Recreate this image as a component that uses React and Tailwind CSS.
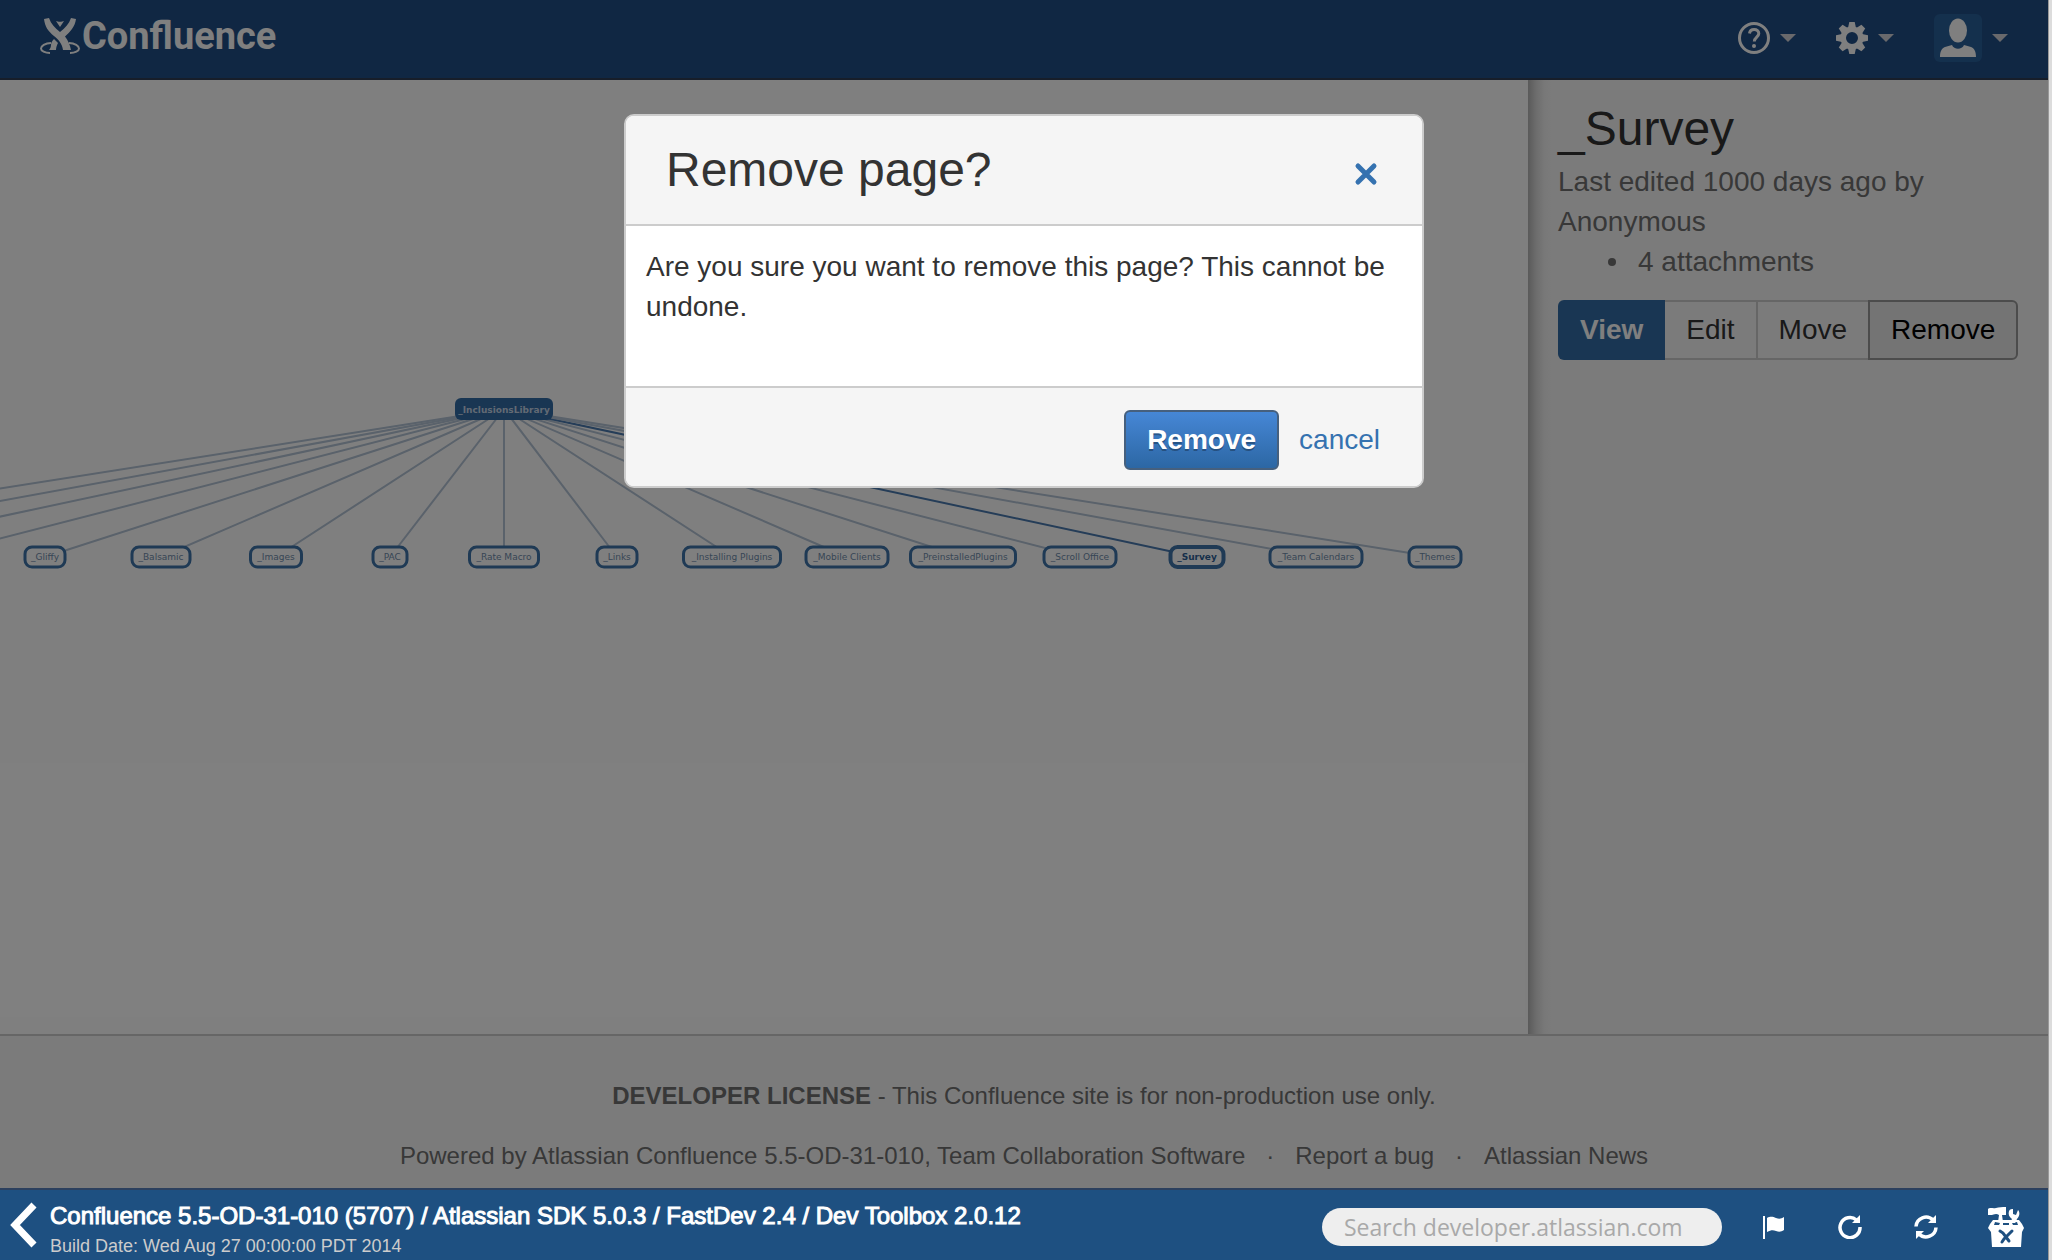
import React from "react";

const ROOT = { x: 504, y: 409, label: "_InclusionsLibrary" };

const NODES = [
  { x: -433 },
  { x: -307 },
  { x: -189 },
  { x: -72 },
  { x: 45, w: 40, label: "_Gliffy" },
  { x: 161, w: 58, label: "_Balsamic" },
  { x: 276, w: 51, label: "_Images" },
  { x: 390, w: 34, label: "_PAC" },
  { x: 504, w: 69, label: "_Rate Macro" },
  { x: 617, w: 40, label: "_Links" },
  { x: 732, w: 97, label: "_Installing Plugins" },
  { x: 847, w: 82, label: "_Mobile Clients" },
  { x: 963, w: 105, label: "_PreinstalledPlugins" },
  { x: 1080, w: 72, label: "_Scroll Office" },
  { x: 1197, w: 53, label: "_Survey", active: true },
  { x: 1316, w: 92, label: "_Team Calendars" },
  { x: 1435, w: 52, label: "_Themes" },
];
const CHILD_Y = 557;

function Graph() {
  return (
    <svg width="1528" height="954" viewBox="0 80 1528 954" className="block" role="img" aria-label="Page tree">
      {NODES.map((n) => (
        <line
          key={n.x}
          x1={ROOT.x}
          y1={ROOT.y}
          x2={n.x}
          y2={CHILD_Y}
          stroke={n.active ? "#4a7ab0" : "#b4c4d6"}
          strokeWidth="2"
        />
      ))}
      <rect x={ROOT.x - 49} y={398} width="98" height="22" rx="6" fill="#326ca6" />
      <text
        x={ROOT.x}
        y={413}
        textAnchor="middle"
        fontSize="9"
        fontWeight="bold"
        fill="#c4d4e6"
        fontFamily="'DejaVu Sans', sans-serif"
      >
        {ROOT.label}
      </text>
      {NODES.filter((n) => n.label).map((n) => (
        <g key={n.label}>
          <rect
            x={n.x - n.w / 2}
            y={CHILD_Y - 10}
            width={n.w}
            height="20"
            rx="7"
            fill="#ffffff"
            stroke="#3e74aa"
            strokeWidth={n.active ? 4 : 3}
          />
          <text
            x={n.x}
            y={CHILD_Y + 3}
            textAnchor="middle"
            fontSize="9"
            fontWeight={n.active ? "bold" : "normal"}
            fill={n.active ? "#2f5f96" : "#6f8cab"}
            fontFamily="'DejaVu Sans', sans-serif"
          >
            {n.label}
          </text>
        </g>
      ))}
    </svg>
  );
}

function Caret() {
  return (
    <svg width="16" height="8" viewBox="0 0 16 8" aria-hidden="true">
      <path d="M0 0h16L8 8z" fill="#d3d3d8" />
    </svg>
  );
}

function Header() {
  return (
    <header className="flex h-20 shrink-0 items-start justify-between border-b-2 border-[#2e3d54] bg-[#214e86] px-10">
      <a href="#home" className="mt-2.5 flex items-center gap-0.5 text-white">
        <svg width="40" height="36" viewBox="0 0 40 36" aria-hidden="true" fill="currentColor">
          <path d="M4 1L9 0C11 6 15 10 20 14C25 10 29 6 31 0L36 1C35 9 30 14 25 18.500C28 22 30 27 31 32L23 32C22 26 19 22 14 18C8 13 5 9 4 1Z" />
          <path d="M16 3c2 1 6 1 8 0l-4 6z" />
          <path d="M14 21l4 4c-1 2-2 4-2 7h-7c1-1 2-3 2-5 0-2 1-4 3-6z" />
          <path
            d="M11 25C5 25 1 28 1 30.500c0 2.500 4 4.500 9 4.500M29 25c6 0 10 3 10 5.500 0 2.500-4 4.500-9 4.500"
            fill="none"
            stroke="currentColor"
            strokeWidth="2"
          />
        </svg>
        <span className="font-[Roboto,sans-serif] text-[38px] leading-[52px] font-bold">Confluence</span>
      </a>
      <nav className="mt-3.5 flex h-12 items-center gap-10 text-white">
        <button type="button" aria-label="Help" className="flex items-center gap-2.5">
          <svg width="32" height="32" viewBox="0 0 32 32" aria-hidden="true" fill="none" stroke="currentColor">
            <circle cx="16" cy="16" r="14.5" strokeWidth="3" />
            <path d="M11.500 11.500c.3-2.600 2-4 4.600-4 2.800 0 4.700 1.600 4.700 4 0 3.500-4.500 3.700-4.500 8" strokeWidth="3" />
            <circle cx="16" cy="24" r="2" fill="currentColor" stroke="none" />
          </svg>
          <Caret />
        </button>
        <button type="button" aria-label="Settings" className="flex items-center gap-2.5">
          <svg width="32" height="32" viewBox="-16 -16 32 32" aria-hidden="true" fill="currentColor">
            <path
              fillRule="evenodd"
              d="M0-11.500A11.500 11.500 0 1 0 0 11.500A11.500 11.500 0 1 0 0-11.500ZM0-6A6 6 0 1 1 0 6A6 6 0 1 1 0-6Z"
            />
            {[0, 45, 90, 135, 180, 225, 270, 315].map((a) => (
              <path key={a} d="M-4-10L-2.700-16H2.700L4-10z" transform={`rotate(${a})`} />
            ))}
          </svg>
          <Caret />
        </button>
        <button type="button" aria-label="User menu" className="flex items-center gap-2.5">
          <span className="flex size-12 justify-center rounded-md bg-[#29609a]">
            <svg width="36" height="48" viewBox="0 0 36 48" aria-hidden="true" fill="currentColor">
              <ellipse cx="18" cy="16.500" rx="9" ry="12" />
              <path d="M0 43c0-6 2-9 5-10l7-2c2 5 10 5 12 0l7 2c3 1 5 4 5 10z" />
            </svg>
          </span>
          <Caret />
        </button>
      </nav>
    </header>
  );
}

function Sidebar() {
  return (
    <aside className="w-[520px] shrink-0 bg-[#f7f7f7] bg-[linear-gradient(to_right,#b4b4b4,#d9d9d9_8px,#f0f0f0_16px,#f7f7f7_24px)] px-[30px] pt-5">
      <h1 className="mb-1 text-[48px] leading-[58px] text-[#333]">_Survey</h1>
      <p className="text-[28px] leading-10 text-[#707070]">
        Last edited 1000 days ago by
        <br />
        Anonymous
      </p>
      <ul className="pl-[50px] text-[28px] leading-10 text-[#707070]">
        <li className="flex items-center gap-[22px] before:size-2 before:rounded-full before:bg-[#707070]">
          4 attachments
        </li>
      </ul>
      <div className="mt-[18px] flex h-[60px] text-[28px] text-[#333]">
        <button type="button" className="rounded-l-md bg-[#326ca6] px-[22px] font-bold text-white">
          View
        </button>
        <button type="button" className="border-y-2 border-r-2 border-[#ccc] px-[21px]">
          Edit
        </button>
        <button type="button" className="border-y-2 border-[#ccc] px-[21px]">
          Move
        </button>
        <button type="button" className="rounded-r-md border-2 border-[#999] bg-[#e9e9e9] px-[21px] text-black">
          Remove
        </button>
      </div>
    </aside>
  );
}

function Footer() {
  return (
    <footer className="flex h-[154px] shrink-0 flex-col items-center border-t-2 border-[#ccc] bg-[#f7f7f7] pt-10 text-2xl leading-10 text-[#707070]">
      <p>
        <strong>DEVELOPER LICENSE</strong> - This Confluence site is for non-production use only.
      </p>
      <ul className="mt-5 flex items-center">
        <li>Powered by Atlassian Confluence 5.5-OD-31-010, Team Collaboration Software</li>
        <li className="px-[21px]">·</li>
        <li>
          <a href="#bug">Report a bug</a>
        </li>
        <li className="px-[21px]">·</li>
        <li>
          <a href="#news">Atlassian News</a>
        </li>
      </ul>
    </footer>
  );
}

function Dialog() {
  return (
    <div
      role="dialog"
      aria-labelledby="dialog-title"
      className="w-[800px] overflow-hidden rounded-[10px] border-2 border-[#ccc] bg-white text-[28px] leading-10 text-[#333]"
    >
      <div className="flex h-[110px] items-center justify-between border-b-2 border-[#ccc] bg-[#f5f5f5] pr-11 pl-10">
        <h2 id="dialog-title" className="text-[48px] leading-[56px]">
          Remove page?
        </h2>
        <button type="button" aria-label="Close" className="mt-2 text-[#3572b0]">
          <svg width="24" height="24" viewBox="0 0 24 24" aria-hidden="true">
            <path d="M4 4l16 16M20 4L4 20" stroke="currentColor" strokeWidth="5" strokeLinecap="round" />
          </svg>
        </button>
      </div>
      <div className="h-40 px-5 pt-[21px]">
        <p>Are you sure you want to remove this page? This cannot be undone.</p>
      </div>
      <div className="flex h-[100px] items-start justify-end gap-5 border-t-2 border-[#ccc] bg-[#f5f5f5] pt-[22px] pr-[42px]">
        <button
          type="button"
          className="h-[60px] rounded-md border-2 border-[#46607e] bg-linear-to-b from-[#4687d6] to-[#2c67a4] px-[21px] font-bold text-white [text-shadow:0_2px_0_rgba(0,0,0,0.3)]"
        >
          Remove
        </button>
        <a href="#cancel" className="leading-[60px] text-[#3572b0]">
          cancel
        </a>
      </div>
    </div>
  );
}

function Toolbar() {
  return (
    <div className="flex h-[72px] shrink-0 items-center border-t-2 border-[#2c405e] bg-[#1e5081] text-white">
      <button type="button" aria-label="Collapse toolbar" className="ml-2">
        <svg width="30" height="46" viewBox="0 0 30 46" aria-hidden="true">
          <path d="M26 3L7 23l19 20" fill="none" stroke="currentColor" strokeWidth="7" />
        </svg>
      </button>
      <div className="ml-3 flex-1 pt-2.5">
        <p className="text-2xl leading-8 [-webkit-text-stroke:1px_white]">
          Confluence 5.5-OD-31-010 (5707) / Atlassian SDK 5.0.3 / FastDev 2.4 / Dev Toolbox 2.0.12
        </p>
        <p className="text-lg leading-7 text-[#ccc]">Build Date: Wed Aug 27 00:00:00 PDT 2014</p>
      </div>
      <div className="mr-6 flex items-center pt-1">
        <input
          type="text"
          aria-label="Search developer.atlassian.com"
          placeholder="Search developer.atlassian.com"
          className="mr-10 h-[38px] w-[400px] rounded-full bg-[#eee] px-[22px] font-[Open_Sans,sans-serif] text-[23px] placeholder:text-[#a9a9a9]"
        />
        <button type="button" aria-label="Flag" className="mr-[52px]">
          <svg width="24" height="26" viewBox="0 0 24 26" aria-hidden="true" fill="currentColor">
            <path d="M1 2h2v23H1zM5 4c4-2 6-1 9 0s5 1 8-1v13c-3 2-5 2-8 1s-5-1-9 1z" />
          </svg>
        </button>
        <button type="button" aria-label="Reload" className="mr-[52px]">
          <svg width="24" height="24" viewBox="0 0 24 24" aria-hidden="true">
            <path d="M18.500 5A10 10 0 1 0 22 12" fill="none" stroke="currentColor" strokeWidth="3.500" />
            <path d="M22 0v8h-8z" fill="currentColor" />
          </svg>
        </button>
        <button type="button" aria-label="Sync" className="mr-[50px]">
          <svg width="24" height="24" viewBox="0 0 24 24" aria-hidden="true">
            <path
              d="M2 11.500A10 10 0 0 1 19 5M22 12.500A10 10 0 0 1 5 19"
              fill="none"
              stroke="currentColor"
              strokeWidth="3.500"
            />
            <path d="M22 0v8h-8zM2 24v-8h8z" fill="currentColor" />
          </svg>
        </button>
        <button type="button" aria-label="Developer toolbox">
          <svg width="36" height="40" viewBox="0 0 36 40" aria-hidden="true" fill="currentColor">
            <path d="M0 2C2 0 5 2 8 1c3-1 6-1 10-1v8h-4l1 7h-5l1-7c-3-2-6 0-7 0H0z" />
            <path d="M21 4c1-2 3-2 4-2v5l3 1 2-5c2 2 2 6-1 9l-2 4h-5l2-4c-3-2-4-5-3-8z" />
            <path
              fillRule="evenodd"
              d="M5 13h26l3 4 2 4-2 4-1 15H4L3 25 0 21l2-4zM7 15l-1 3h5l1-2zM15 16v2h6v-2zM24 16l1 2h5l-1-3z"
            />
            <path
              d="M12 24l3 2 6 8M24 24l-8 8-2 3"
              fill="none"
              stroke="#1e5081"
              strokeWidth="3"
              strokeLinecap="round"
            />
          </svg>
        </button>
      </div>
    </div>
  );
}

export default function App() {
  return (
    <div className="flex h-screen bg-[#dcdcdc] font-[Liberation_Sans,Arial,sans-serif]">
      <div className="flex min-w-0 flex-1 flex-col">
        <div className="relative flex min-h-0 flex-1 flex-col">
          <Header />
          <div className="flex min-h-0 flex-1 bg-white">
            <main className="min-w-0 flex-1 overflow-hidden">
              <Graph />
            </main>
            <Sidebar />
          </div>
          <Footer />
          <div className="absolute inset-0 flex items-start justify-center bg-black/50 pt-[114px]">
            <Dialog />
          </div>
        </div>
        <Toolbar />
      </div>
      <div className="w-1 shrink-0 border-l border-[#999]" />
    </div>
  );
}
